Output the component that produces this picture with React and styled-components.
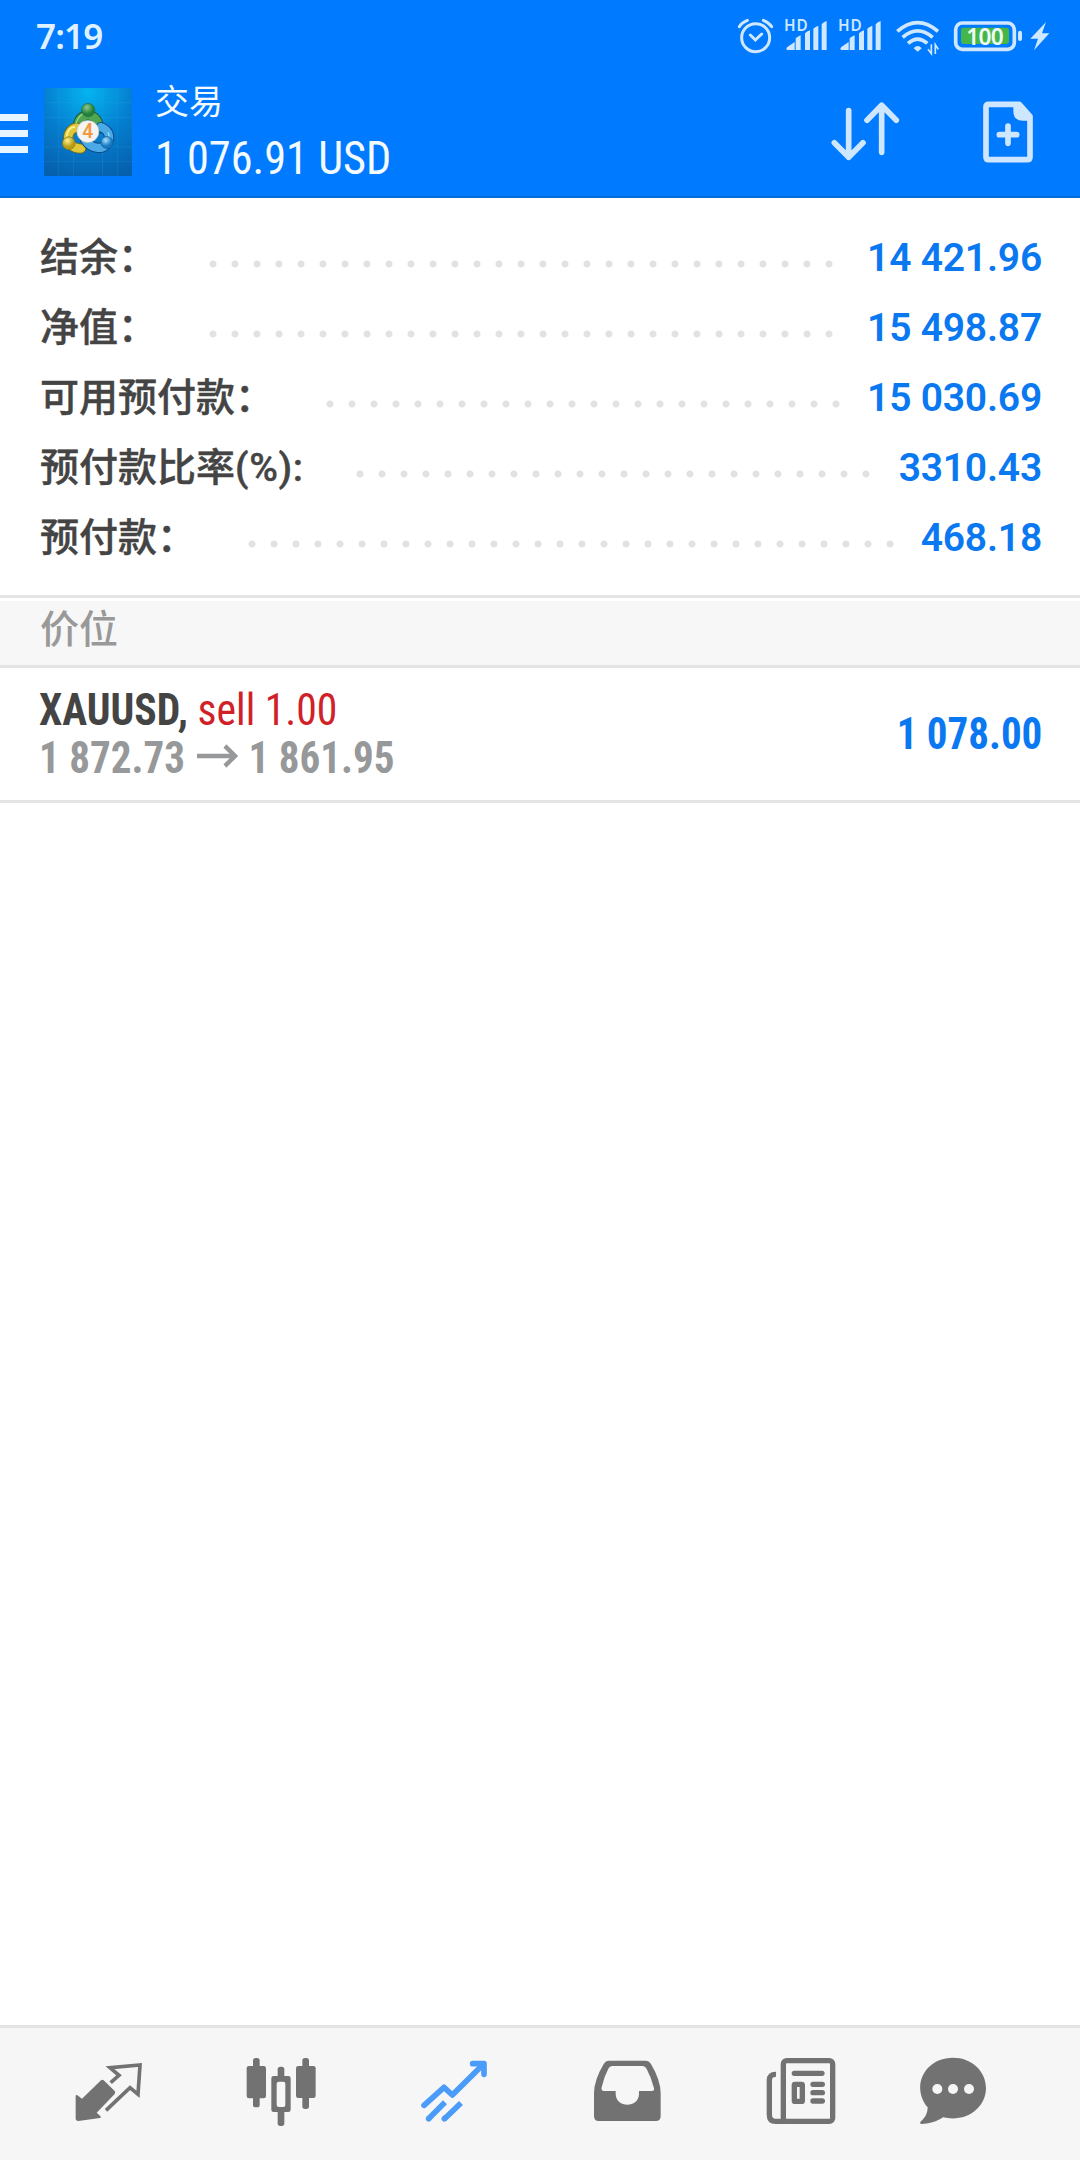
import React from "react";
import styled, { createGlobalStyle } from "styled-components";

const GlobalStyle = createGlobalStyle`
  * {
    box-sizing: border-box;
  }

  body {
    margin: 0;
    background-color: #fff;
    font-family: Roboto, "Noto Sans CJK SC", sans-serif;
  }
`;

const Screen = styled.div`
  width: 1080px;
  height: 2160px;
  display: flex;
  flex-direction: column;
  background-color: #fff;
  overflow: hidden;
`;

const Header = styled.header`
  height: 198px;
  background-color: #007aff;
  border-bottom: 2px solid #0a6cd8;
`;

const StatusBar = styled.div`
  height: 72px;
  padding: 0 30px 0 36px;
  display: flex;
  align-items: center;
  justify-content: space-between;
`;

const Clock = styled.span`
  font-family: "Noto Sans", sans-serif;
  font-size: 35px;
  font-weight: 650;
  letter-spacing: -0.8px;
  line-height: 72px;
  color: #dff1ff;
`;

const StatusIcons = styled.div`
  height: 72px;
  display: flex;
  color: #cfe8ff;
`;

const StatusIcon = styled.svg`
  width: ${(props) => props.$width}px;
  height: 72px;
  flex-shrink: 0;
  overflow: visible;
  margin-right: ${(props) => props.$gap || 0}px;
`;

const AppBar = styled.div`
  height: 124px;
  display: flex;
  align-items: flex-start;
`;

const MenuButton = styled.div`
  width: 28px;
  margin: 42px 16px 0 0;
  display: flex;
  flex-direction: column;
  gap: 9px;
`;

const MenuBar = styled.span`
  height: 7px;
  background-color: #e6f5ff;
`;

const Logo = styled.svg`
  width: 88px;
  height: 88px;
  margin: 16px 23px 0 0;
`;

const TitleBlock = styled.div`
  flex: 1;
  padding-top: 8px;
  color: #f4fbff;
`;

const Title = styled.div`
  font-size: 34px;
  line-height: 44px;
  margin-bottom: 12px;
`;

const Condensed = styled.span`
  white-space: pre;
  font-family: "Roboto Condensed", Roboto, sans-serif;
  font-weight: ${(props) => (props.$bold ? 700 : 400)};
`;

const Profit = styled.div`
  font-size: 47px;
  line-height: 44px;
  transform: scaleX(0.942);
  transform-origin: left;
`;

const HeaderIcon = styled.svg`
  width: 76px;
  height: 76px;
  margin: 22px ${(props) => props.$right}px 0 0;
  color: #cfe6ff;
`;

const Summary = styled.section`
  padding: 25px 38px 22px 40px;
`;

const SummaryRow = styled.div`
  height: 70px;
  display: flex;
  font-size: 39px;
  line-height: 70px;
  font-weight: 500;
  white-space: pre;
`;

const SummaryLabel = styled.span`
  color: #444;
  -webkit-text-stroke: 0.4px #444;
`;

const Unit = styled.span`
  letter-spacing: 0.65px;
`;

const Leader = styled.span`
  flex: 1;
  margin: 0 24px 0 45px;
  background: radial-gradient(circle at 11px 11px, #e2e2e2 3px, transparent 4px) 0 30px / 22px 22px repeat-x;
`;

const SummaryValue = styled.span`
  font-weight: 650;
  letter-spacing: -0.2px;
  color: #0a78f0;
`;

const SectionTitle = styled.div`
  height: 73px;
  padding: 0 40px;
  border-top: 3px solid #e4e4e4;
  border-bottom: 3px solid #e4e4e4;
  background: linear-gradient(#fff 3px, #f7f7f7 3px);
  font-size: 39px;
  font-weight: 500;
  line-height: 65px;
  color: #999;
`;

const Position = styled.div`
  height: 135px;
  padding: 0 38px 0 39px;
  display: flex;
  align-items: center;
  justify-content: space-between;
  border-bottom: 3px solid #e4e4e4;
  font-size: 44px;
  line-height: 48px;
`;

const PositionLine = styled.div`
  height: 48px;
  display: flex;
  align-items: center;
  color: ${(props) => props.$color};
  transform: scaleX(${(props) => props.$squeeze});
  transform-origin: left;
`;

const Side = styled(Condensed)`
  color: #cf2127;
`;

const PositionProfit = styled.div`
  color: #0a78f0;
  transform: scaleX(0.932);
  transform-origin: right;
`;

const Arrow = styled.svg`
  width: 44px;
  height: 24px;
  margin: 0 11px 4px 13px;
`;

const Content = styled.main`
  flex: 1;
`;

const TabBar = styled.nav`
  height: 135px;
  padding: 27px 0 0 71px;
  display: grid;
  grid-template-columns: 172px 173px 173px 174px 152px 76px;
  border-top: 3px solid #e4e4e4;
  background-color: #f6f6f6;
`;

const TabIcon = styled.svg`
  width: 76px;
  height: 76px;
  color: ${(props) => (props.$active ? "#4a9cf8" : "#727272")};
`;

const summary = [
  { label: "结余：", value: "14 421.96" },
  { label: "净值：", value: "15 498.87" },
  { label: "可用预付款：", value: "15 030.69" },
  { label: "预付款比率", unit: "(%):", value: "3310.43" },
  { label: "预付款：", value: "468.18" },
];

const SignalIcon = ({ gap }) => (
  <StatusIcon $width={42} $gap={gap} viewBox="194 0 126 216" fill="currentColor">
    <text x="191" y="94" fontFamily="Noto Sans" fontSize="46" fontWeight="600" textLength="71">HD</text>
    <path d="M201 150q-6-3 0-9l22-15v24zM226 150v-35q7-6 15-9v44zM254 150v-50q6-6 15-9v59zM279 150V86q6-6 15-9v73zM304 150V73q6-7 15-10v87z" />
  </StatusIcon>
);

const StatusIconList = () => (
  <StatusIcons>
    <StatusIcon $width={35} $gap={12} viewBox="52 0 105 216" fill="none" stroke="currentColor" strokeWidth="9" strokeLinecap="round">
      <circle cx="105" cy="113" r="42" />
      <path d="M89 105l15 15 19-18M56 80q7-12 24-19M128 61q17 7 25 19" />
    </StatusIcon>
    <SignalIcon gap={12} />
    <SignalIcon gap={15} />
    <StatusIcon $width={43} $gap={15} viewBox="527 0 129 216" fill="none" stroke="currentColor" strokeWidth="11">
      <path d="M531 94Q592 42 653 94M547 112Q592 73 637 112M563 130Q592 105 621 130" />
      <path d="M580 145q12-14 24 0l-12 10z" fill="currentColor" stroke="none" />
      <path d="M633 133v28l-10-13M645 162v-28l9 14" strokeWidth="5" />
    </StatusIcon>
    <StatusIcon $width={69} $gap={7} viewBox="702 0 207 216">
      <rect x="707" y="69" width="176" height="79" rx="20" fill="none" stroke="currentColor" strokeWidth="11" />
      <rect x="723" y="83" width="144" height="49" rx="8" fill="#46b649" />
      <rect x="894" y="92" width="12" height="31" rx="6" fill="currentColor" />
      <text x="795" y="134" textAnchor="middle" fontFamily="Noto Sans" fontSize="68" fontWeight="600" textLength="112" fill="#eefaf5">100</text>
    </StatusIcon>
    <StatusIcon $width={20} viewBox="930 0 60 216" fill="currentColor">
      <path d="M978 66L931 116H954L942 151L988 100H966Z" />
    </StatusIcon>
  </StatusIcons>
);

const AppLogo = () => (
  <Logo viewBox="133 265 263 263">
    <defs>
      <radialGradient id="sky" cx="0.5" cy="0.05" r="1">
        <stop offset="0" stopColor="#04b4f0" />
        <stop offset="0.5" stopColor="#057fd0" />
        <stop offset="1" stopColor="#0560ad" />
      </radialGradient>
      <radialGradient id="green" cx="0.4" cy="0.3">
        <stop offset="0" stopColor="#8bc98a" />
        <stop offset="1" stopColor="#23803a" />
      </radialGradient>
      <radialGradient id="yellow" cx="0.4" cy="0.3">
        <stop offset="0" stopColor="#fff08a" />
        <stop offset="1" stopColor="#b99b16" />
      </radialGradient>
      <radialGradient id="blue" cx="0.4" cy="0.3">
        <stop offset="0" stopColor="#a5e2ff" />
        <stop offset="1" stopColor="#1778c2" />
      </radialGradient>
    </defs>
    <rect x="133" y="265" width="263" height="263" fill="url(#sky)" />
    <path d="M177 265v263M221 265v263M308 265v263M352 265v263M133 309h263M133 353h263M133 441h263M133 485h263" stroke="#43b4ee" strokeWidth="1.5" opacity="0.3" />
    <g fill="none" strokeLinecap="round">
      <path d="M235 386C229 334 299 334 296 386" stroke="#165a35" strokeWidth="31" />
      <path d="M235 386C229 334 299 334 296 386" stroke="#4fa652" strokeWidth="25" />
      <path d="M236 384C203 378 184 444 244 446" stroke="#6a6c26" strokeWidth="31" />
      <path d="M236 384C203 378 184 444 244 446" stroke="#dfc735" strokeWidth="25" />
      <path d="M303 382C344 397 328 446 294 444C276 442 264 433 256 420" stroke="#0b4c8c" strokeWidth="31" />
      <path d="M303 382C344 397 328 446 294 444C276 442 264 433 256 420" stroke="#4ba9e5" strokeWidth="25" />
      <path d="M229 370C235 350 246 342 258 340" stroke="#9bd18c" strokeWidth="4" />
      <path d="M201 408C203 392 211 383 224 381" stroke="#fff29b" strokeWidth="5" />
      <path d="M325 399C331 414 327 431 313 442" stroke="#a1dbff" strokeWidth="4" />
    </g>
    <circle cx="265" cy="331" r="20" fill="url(#green)" stroke="#236d42" strokeWidth="2" />
    <circle cx="207" cy="430" r="19" fill="url(#yellow)" stroke="#7f7822" strokeWidth="2" />
    <circle cx="321" cy="428" r="18" fill="url(#blue)" stroke="#145f9d" strokeWidth="2" />
    <circle cx="264" cy="395" r="33" fill="#f4f4f4" stroke="#b9c2bd" strokeWidth="2" />
    <text x="264" y="415" textAnchor="middle" fontFamily="Roboto" fontSize="58" fontWeight="600" fill="#f39a3e">4</text>
  </Logo>
);

const TabIcons = () => (
  <TabBar>
    <TabIcon viewBox="93 135 228 228">
      <path d="M107 257q1-4 5-1l14 10 57-55q4-3 8 0l33 32q3 5 0 9l-54 56 10 9q5 5 0 7l-65 9q-8 0-8-8z" fill="currentColor" />
      <path d="M212 218l25-22-27-23 90-8-6 88-24-20-72 68" fill="none" stroke="currentColor" strokeWidth="11" />
    </TabIcon>
    <TabIcon viewBox="609 135 228 228" fill="currentColor">
      <rect x="620" y="168" width="58" height="97" rx="7" />
      <rect x="639" y="144" width="20" height="148" rx="8" />
      <rect x="768" y="168" width="59" height="96" rx="7" />
      <rect x="787" y="144" width="20" height="153" rx="8" />
      <rect x="713" y="170" width="20" height="40" rx="8" />
      <rect x="713" y="296" width="20" height="52" rx="8" />
      <path fillRule="evenodd" d="M701 198h44q7 0 7 7v94q0 7-7 7h-44q-7 0-7-7v-94q0-7 7-7zM717 215q-7 0-7 6v64q0 6 7 6h13q6 0 6-6v-64q0-6-6-6z" />
    </TabIcon>
    <TabIcon $active viewBox="108 135 228 228" fill="none" stroke="currentColor" strokeWidth="17">
      <path d="M132 286l60-54 25 23 90-89" strokeLinecap="round" strokeLinejoin="round" />
      <path d="M278 161h34v32" strokeLinecap="round" strokeLinejoin="round" />
      <path d="M297 160h16v18z" fill="currentColor" strokeWidth="4" />
      <path d="M195 277l-50 50M243 279l-50 48" />
      <path d="M147 325l-1 1M194 325l-1 1" strokeLinecap="round" />
    </TabIcon>
    <TabIcon viewBox="627 135 228 228" fill="currentColor">
      <path fillRule="evenodd" d="M687 152h109q11 0 17 10 29 49 29 88v69q0 14-14 14H656q-14 0-14-14v-69q0-39 29-88 6-10 16-10zM696 168q-7 0-11 8-13 24-20 56-2 11 6 11h36v8c0 44 70 44 70 0v-8h38q9 0 7-8-7-30-22-58-4-9-12-9z" />
    </TabIcon>
    <TabIcon viewBox="129 135 228 228" fill="none" stroke="currentColor" strokeWidth="16">
      <rect x="190" y="152" width="148" height="182" rx="10" />
      <path d="M168 193q-20-1-20 18v103q0 20 19 20h30" />
      <path d="M223 190h83M279 223h28M279 248h28M279 273h28" strokeLinecap="round" />
      <rect x="223" y="223" width="24" height="51" rx="2" />
    </TabIcon>
    <TabIcon viewBox="585 135 228 228" fill="currentColor">
      <path d="M699 143c57 0 99 41 99 91 0 61-61 104-129 88-21 14-44 20-65 20q-7-1-1-8c14-12 20-27 20-42-51-60-11-149 76-149z" />
      <g fill="#f6f6f6">
        <circle cx="652" cy="237" r="15" />
        <circle cx="699" cy="237" r="15" />
        <circle cx="747" cy="237" r="15" />
      </g>
    </TabIcon>
  </TabBar>
);

const App = () => {
  return (
    <Screen>
      <GlobalStyle />
      <Header>
        <StatusBar>
          <Clock>7:19</Clock>
          <StatusIconList />
        </StatusBar>
        <AppBar>
          <MenuButton>
            <MenuBar />
            <MenuBar />
            <MenuBar />
          </MenuButton>
          <AppLogo />
          <TitleBlock>
            <Title>交易</Title>
            <Profit>
              <Condensed>1 076.91 USD</Condensed>
            </Profit>
          </TitleBlock>
          <HeaderIcon $right={67} viewBox="321 282 228 228" fill="none" stroke="currentColor" strokeWidth="17" strokeLinecap="round" strokeLinejoin="round">
            <path d="M386 332v140M343 428l43 44 43-44M485 457V316M441 361l44-45 44 45" />
          </HeaderIcon>
          <HeaderIcon $right={34} viewBox="750 282 228 228" fill="none" stroke="currentColor" strokeWidth="17">
            <path d="M806 313h92l32 36v122q0 8-8 8H806q-8 0-8-8V321q0-8 8-8z" strokeLinejoin="round" />
            <path d="M880 313v20q0 29 29 29h25v-16l-34-33z" fill="currentColor" stroke="none" />
            <path d="M864 378v52M838 404h52" strokeLinecap="round" />
          </HeaderIcon>
        </AppBar>
      </Header>
      <Content>
        <Summary>
          {summary.map((item) => (
            <SummaryRow key={item.label}>
              <SummaryLabel>
                {item.label}
                {item.unit && <Unit>{item.unit}</Unit>}
              </SummaryLabel>
              <Leader />
              <SummaryValue>{item.value}</SummaryValue>
            </SummaryRow>
          ))}
        </Summary>
        <SectionTitle>价位</SectionTitle>
        <Position>
          <div>
            <PositionLine $color="#444" $squeeze={0.946}>
              <Condensed $bold>XAUUSD, </Condensed>
              <Side>sell 1.00</Side>
            </PositionLine>
            <PositionLine $color="#96989a" $squeeze={0.934}>
              <Condensed $bold>1 872.73</Condensed>
              <Arrow viewBox="0 0 44 24" fill="none" stroke="currentColor" strokeWidth="4.5">
                <path d="M0 12h41M30 2l11 10-11 10" />
              </Arrow>
              <Condensed $bold>1 861.95</Condensed>
            </PositionLine>
          </div>
          <PositionProfit>
            <Condensed $bold>1 078.00</Condensed>
          </PositionProfit>
        </Position>
      </Content>
      <TabIcons />
    </Screen>
  );
};

export default App;
